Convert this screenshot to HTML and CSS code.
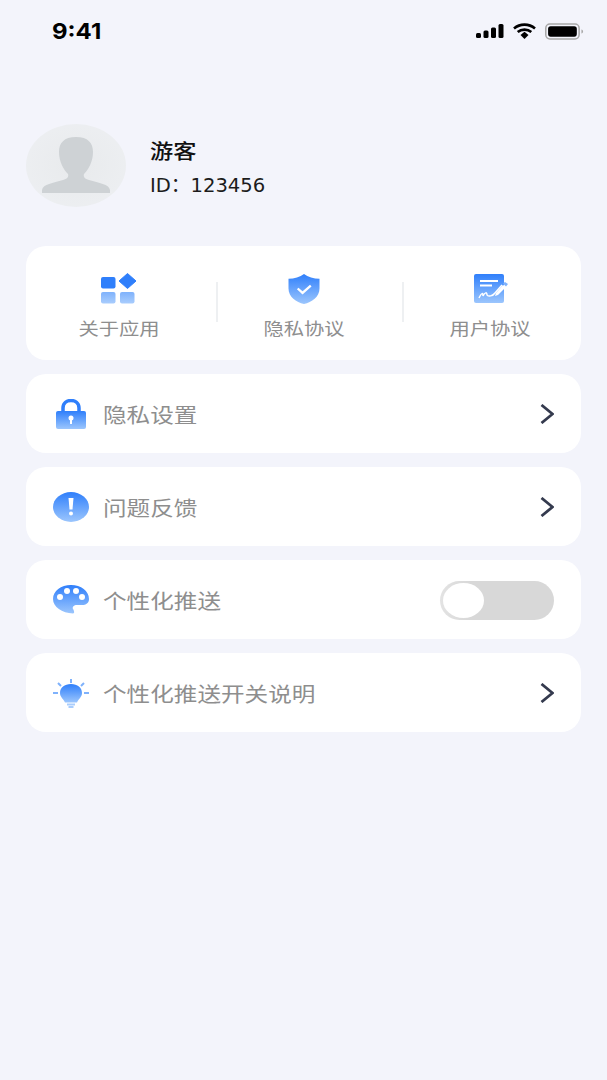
FILE: index.html
```html
<!DOCTYPE html>
<html lang="zh-CN">
<head>
    <meta charset="UTF-8">
    <meta name="viewport" content="width=device-width, initial-scale=1.0">
    <title>我的</title>
    <link rel="stylesheet" href="styles.css">
</head>
<body>
    <svg class="svg-defs" width="0" height="0" aria-hidden="true">
        <defs>
            <linearGradient id="blue" x1="0" y1="0" x2="0" y2="1">
                <stop offset="0" stop-color="#2f7ffb"/>
                <stop offset="1" stop-color="#9cc6fd"/>
            </linearGradient>
            <linearGradient id="blue-light" x1="0" y1="0" x2="0" y2="1">
                <stop offset="0" stop-color="#7fb2fc"/>
                <stop offset="1" stop-color="#a9cdfd"/>
            </linearGradient>
        </defs>
    </svg>

    <!-- Status bar -->
    <header class="status-bar">
        <span class="status-time">9:41</span>
        <div class="status-icons">
            <svg width="28" height="14" viewBox="0 0 28 14">
                <rect x="0" y="9" width="5" height="5" rx="1.5" fill="#000"/>
                <rect x="7.5" y="6.5" width="5" height="7.5" rx="1.5" fill="#000"/>
                <rect x="15" y="3.5" width="5" height="10.5" rx="1.5" fill="#000"/>
                <rect x="22.5" y="0" width="5" height="14" rx="1.5" fill="#000"/>
            </svg>
            <svg width="25" height="16" viewBox="0 0 24 16">
                <path d="M1.500 5.500C7.500 .3 16.500 .3 22.500 5.500M5.200 9C9 5.800 15 5.800 18.800 9" fill="none" stroke="#000" stroke-width="2.600"/>
                <path d="M8 12 12 8.800 16 12 12 16z" fill="#000"/>
            </svg>
            <svg width="39" height="17" viewBox="0 0 38 16">
                <rect x=".75" y=".75" width="32.500" height="14.500" rx="4" fill="none" stroke="#a8a8a8" stroke-width="1.500"/>
                <rect x="3" y="3" width="28" height="10" rx="2.500" fill="#000"/>
                <path d="M35.500 6v4c1-.3 1.600-1 1.600-2s-.6-1.700-1.600-2z" fill="#a8a8a8"/>
            </svg>
        </div>
    </header>

    <main class="content">
        <!-- Profile -->
        <section class="profile">
            <div class="avatar">
                <svg width="70" height="56" viewBox="0 0 70 56">
                    <path d="M35 0C23 0 18 6 18 15c0 9 4 17 9 22 1 3-1 5-5 6C12 46 2 47 1 53v3h68v-3c-1-6-11-7-21-10-4-1-6-3-5-6 5-5 9-13 9-22C52 6 47 0 35 0z" fill="#ced2d5"/>
                </svg>
            </div>
            <div class="profile-info">
                <h1 class="profile-name">游客</h1>
                <p class="profile-id">ID：123456</p>
            </div>
        </section>

        <!-- Shortcuts -->
        <section class="card shortcuts">
            <div class="shortcut">
                <svg width="38" height="31" viewBox="0 0 38 31">
                    <rect x="1" y="4" width="14.500" height="11.500" rx="2" fill="#2f7ffb"/>
                    <path d="M27.500 .5l8.500 7.500-8.500 7.500-8.500-7.500z" fill="#2f7ffb" stroke="#2f7ffb" stroke-linejoin="round"/>
                    <rect x="1" y="19" width="14.500" height="11.500" rx="2" fill="url(#blue-light)"/>
                    <rect x="20" y="19" width="14.500" height="11.500" rx="2" fill="url(#blue-light)"/>
                </svg>
                <span>关于应用</span>
            </div>
            <div class="shortcut">
                <svg width="34" height="31" viewBox="0 0 34 32">
                    <path d="M17 1c4 3 10 5 16 5v10c0 9-8 14-16 16C9 30 1 25 1 16V6c6 0 12-2 16-5z" fill="url(#blue)"/>
                    <path d="M10.500 16l5 4.500L24 13" fill="none" stroke="#fff" stroke-width="2.400"/>
                </svg>
                <span>隐私协议</span>
            </div>
            <div class="shortcut">
                <svg width="36" height="31" viewBox="0 0 36 31">
                    <rect x="2" y="1" width="30" height="29" rx="2" fill="url(#blue)"/>
                    <path d="M8 8h18M8 12.500h12" stroke="#fff" stroke-width="1.800"/>
                    <path d="M7 25c3-6 4-5 4-2 2-4 4-4 4-1 1 2 6 1 8-2l7-8" fill="none" stroke="#fff" stroke-width="1.500"/>
                    <path d="M23 23l1-3 7-8 3 2-8 8z" fill="#fff"/>
                    <path d="M31 10.500l2-1.500 3 2-2 2.500z" fill="#7fb2fc"/>
                </svg>
                <span>用户协议</span>
            </div>
        </section>

        <!-- Settings rows -->
        <section class="card row">
            <svg class="row-icon" width="36" height="30" viewBox="0 0 36 30">
                <path d="M10 14V9c0-10 16-10 16 0v5" fill="none" stroke="#2f7ffb" stroke-width="3.500"/>
                <rect x="3" y="12" width="30" height="18" rx="2" fill="url(#blue)"/>
                <circle cx="18" cy="19" r="2.500" fill="#fff"/>
                <rect x="17" y="20" width="2" height="5" fill="#fff"/>
            </svg>
            <span class="row-label">隐私设置</span>
            <svg class="chevron" width="14" height="20" viewBox="0 0 14 20"><path d="M1.500 1l11 9-11 9" fill="none" stroke="#343a4e" stroke-width="2.800"/></svg>
        </section>

        <section class="card row">
            <svg class="row-icon" width="36" height="30" viewBox="0 0 36 30">
                <ellipse cx="18" cy="15" rx="18" ry="15" fill="url(#blue)"/>
                <path d="M15.500 6h5l-1 11.500h-3z" fill="#fff"/>
                <circle cx="18" cy="21.500" r="2" fill="#fff"/>
            </svg>
            <span class="row-label">问题反馈</span>
            <svg class="chevron" width="14" height="20" viewBox="0 0 14 20"><path d="M1.500 1l11 9-11 9" fill="none" stroke="#343a4e" stroke-width="2.800"/></svg>
        </section>

        <section class="card row">
            <svg class="row-icon" width="36" height="30" viewBox="0 0 36 30">
                <path d="M18 0C8 0 0 6 0 14c0 8 9 14 20 14.500 2 0 1-3 0-4.500-1-2 1-4 4-4h5c4 0 7-2 7-6C36 6 28 0 18 0z" fill="url(#blue)"/>
                <circle cx="7" cy="12" r="3" fill="#fff"/>
                <circle cx="14" cy="6" r="3" fill="#fff"/>
                <circle cx="23" cy="6" r="3" fill="#fff"/>
                <circle cx="29" cy="12" r="3" fill="#fff"/>
            </svg>
            <span class="row-label">个性化推送</span>
            <div class="toggle"><span class="toggle-knob"></span></div>
        </section>

        <section class="card row">
            <svg class="row-icon" width="36" height="30" viewBox="0 0 36 30">
                <path d="M18 1v4M5 5l3 3M31 5l-3 3M0 15h5M31 15h5" stroke="#7fb2fc" stroke-width="2" fill="none"/>
                <path d="M18 6c6.500 0 11 3.500 11 9 0 4-3.500 6-5 9.500H12C10.500 21 7 19 7 15c0-5.500 4.500-9 11-9z" fill="url(#blue)"/>
                <path d="M14 26.500h8M15.500 29h5" stroke="#a9cdfd" stroke-width="1.800"/>
            </svg>
            <span class="row-label">个性化推送开关说明</span>
            <svg class="chevron" width="14" height="20" viewBox="0 0 14 20"><path d="M1.500 1l11 9-11 9" fill="none" stroke="#343a4e" stroke-width="2.800"/></svg>
        </section>
    </main>
</body>
</html>
```

FILE: styles.css
```css
/* Reset */
body, h1, p {
    margin: 0;
    padding: 0;
}

body {
    width: 607px;
    height: 1080px;
    overflow: hidden;
    background-color: #f3f4fb;
    font-family: "Noto Sans CJK SC", "Noto Sans", sans-serif;
}

.svg-defs {
    display: block;
    height: 0;
}

/* Status bar */
.status-bar {
    display: flex;
    justify-content: space-between;
    align-items: center;
    height: 62px;
    padding: 0 23px 0 52px;
}

.status-time {
    font-family: "Inter", sans-serif;
    font-size: 22px;
    font-weight: 700;
    color: #000;
    transform: scaleX(1.09);
    transform-origin: left;
}

.status-icons {
    display: flex;
    align-items: center;
    gap: 8px;
}

/* Profile */
.content {
    padding: 62px 26px 0;
}

.profile {
    display: flex;
    align-items: center;
    gap: 24px;
    margin-bottom: 39px;
}

.avatar {
    display: flex;
    justify-content: center;
    align-items: flex-end;
    box-sizing: border-box;
    width: 100px;
    height: 83px;
    padding-bottom: 14px;
    border-radius: 50%;
    background: radial-gradient(#e8eaec, #eef0f3);
}

.profile-info {
    padding-top: 6px;
}

.profile-name {
    font-size: 20px;
    font-weight: 500;
    line-height: 28px;
    color: #111;
    transform: scaleX(1.16);
    transform-origin: left;
}

.profile-id {
    margin-top: 7px;
    font-family: "DejaVu Sans", "Noto Sans CJK SC", sans-serif;
    font-size: 19.600px;
    line-height: 28px;
    color: #1c1c1c;
}

/* Cards */
.card {
    background-color: #fff;
    border-radius: 20px;
    margin-bottom: 14px;
}

.shortcuts {
    display: grid;
    grid-template-columns: 185px 186px 186px;
    height: 114px;
}

.shortcut {
    display: flex;
    flex-direction: column;
    align-items: center;
    justify-content: flex-end;
    gap: 11px;
    padding-bottom: 19px;
    font-size: 17.500px;
    line-height: 26px;
    color: #8e8e8e;
}

.shortcut span {
    white-space: nowrap;
    transform: scaleX(1.16);
}

.shortcut + .shortcut {
    background: linear-gradient(#eef0f2, #eef0f2) 5px 36px / 2px 40px no-repeat;
}

/* Setting rows */
.row {
    display: flex;
    align-items: center;
    box-sizing: border-box;
    height: 79px;
    padding: 0 27px;
}

.row-icon {
    flex: none;
    margin-right: 14px;
}

.row-label {
    flex: 1;
    padding-top: 2px;
    font-size: 20px;
    color: #8e8e8e;
    transform: scaleX(1.18);
    transform-origin: left;
}

.toggle {
    box-sizing: border-box;
    width: 114px;
    height: 39px;
    margin-top: 2px;
    padding: 2px 3px;
    border-radius: 20px;
    background: linear-gradient(90deg, #e3e3e3, #d8d8d8 30px);
}

.toggle-knob {
    display: block;
    width: 41px;
    height: 35px;
    border-radius: 50%;
    background-color: #fff;
}
```
